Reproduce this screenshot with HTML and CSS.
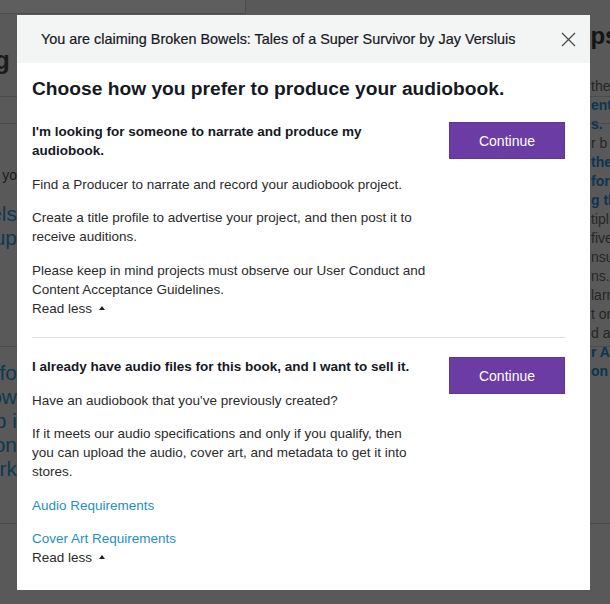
FILE: index.html
```html
<!DOCTYPE html>
<html lang="en">
<head>
<meta charset="utf-8">
<title>Claim audiobook</title>
<link rel="stylesheet" href="styles.css">
</head>
<body>
<div class="page">
  <div class="page-top"></div>
  <div class="page-grid">
    <div class="left-col">
      <div class="cut l-head"><span>Listing</span></div>
      <div class="rule r1"></div>
      <div class="rule r2"></div>
      <div class="cut l-small"><span>for yo</span></div>
      <div class="l-links">
        <div class="cut"><span>Bowels</span></div>
        <div class="cut"><span>group</span></div>
      </div>
      <div class="rule r3"></div>
      <div class="l-links l-links2">
        <div class="cut"><span>fo</span></div>
        <div class="cut"><span>how</span></div>
        <div class="cut"><span>up i</span></div>
        <div class="cut"><span>on</span></div>
        <div class="cut"><span>work</span></div>
      </div>
      <div class="rule r4"></div>
    </div>
    <div class="mid-col"></div>
    <div class="right-col">
      <div class="r-head">Next steps</div>
      <div class="r-lines">
        <div class="dk">the</div>
        <div class="bl">ent</div>
        <div class="bl">s.</div>
        <div class="dk">r b</div>
        <div class="bl">the</div>
        <div class="bl">for</div>
        <div class="bl">g th</div>
        <div class="dk">tipl</div>
        <div class="dk">five</div>
        <div class="dk">nsu</div>
        <div class="dk">ns.</div>
        <div class="dk">larn</div>
        <div class="dk">t or</div>
        <div class="dk">d ar</div>
        <div class="bl">r A</div>
        <div class="bl">on F</div>
      </div>
    </div>
  </div>
</div>

<div class="modal" role="dialog">
  <div class="modal-header">
    <div class="modal-title">You are claiming Broken Bowels: Tales of a Super Survivor by Jay Versluis</div>
    <button class="close" aria-label="Close">
      <svg width="15" height="15" viewBox="0 0 15 15"><path d="M1 1L14 14M14 1L1 14" stroke="#4a4a4a" stroke-width="1.3" fill="none"/></svg>
    </button>
  </div>
  <div class="modal-body">
    <h2>Choose how you prefer to produce your audiobook.</h2>
    <div class="option">
      <div class="option-text">
        <p class="strong">I'm looking for someone to narrate and produce my audiobook.</p>
        <p>Find a Producer to narrate and record your audiobook project.</p>
        <p>Create a title profile to advertise your project, and then post it to receive auditions.</p>
        <p class="last">Please keep in mind projects must observe our User Conduct and Content Acceptance Guidelines.</p>
        <div class="read-less">Read less <span class="caret"></span></div>
      </div>
      <button class="continue">Continue</button>
    </div>
    <div class="option option2">
      <div class="option-text">
        <p class="strong">I already have audio files for this book, and I want to sell it.</p>
        <p>Have an audiobook that you've previously created?</p>
        <p>If it meets our audio specifications and only if you qualify, then<br>you can upload the audio, cover art, and metadata to get it into<br>stores.</p>
        <p><a href="#">Audio Requirements</a></p>
        <p class="last"><a href="#">Cover Art Requirements</a></p>
        <div class="read-less">Read less <span class="caret"></span></div>
      </div>
      <button class="continue">Continue</button>
    </div>
  </div>
</div>
</body>
</html>
```

FILE: styles.css
```css
html, body {
  margin: 0;
  padding: 0;
}
body {
  width: 610px;
  height: 604px;
  overflow: hidden;
  background: #595959;
  font-family: "Liberation Sans", Arial, sans-serif;
  position: relative;
}

/* dimmed background page */
.page-top {
  width: 245px;
  height: 13px;
  background: #5e5e5e;
  border-bottom: 1px solid #4c4c4c;
  border-right: 1px solid #4c4c4c;
  border-bottom-right-radius: 2px;
}
.page-grid {
  display: grid;
  grid-template-columns: 17px 573px 20px;
}
.left-col {
  display: flex;
  flex-direction: column;
  color: #1b1b1b;
}
.cut {
  display: flex;
  justify-content: flex-end;
  white-space: nowrap;
}
.cut span {
  flex-shrink: 0;
}
.l-head {
  margin-top: 30px;
  font: bold 26px/32px "Liberation Sans", Arial, sans-serif;
  padding-right: 7px;
}
.rule {
  height: 1px;
  background: #4b4b4b;
  width: 610px;
}
.r1 { margin-top: 20px; }
.r2 { margin-top: 26px; }
.l-small {
  margin-top: 42px;
  font-size: 14px;
  line-height: 19px;
}
.l-links {
  margin-top: 17px;
  font-size: 21px;
  line-height: 24px;
  color: #0e3a50;
}
.r3 { margin-top: 96px; }
.l-links2 { margin-top: 14px; }
.r4 { margin-top: 42px; }

.right-col {
  display: flex;
  flex-direction: column;
  white-space: nowrap;
}
.r-head {
  margin-top: 8px;
  margin-left: -93px;
  font: bold 24px/28px "Liberation Sans", Arial, sans-serif;
  color: #141414;
}
.r-lines {
  margin-top: 27px;
  font-size: 14px;
  line-height: 19px;
}
.r-lines div { margin-left: 1px; }
.dk { color: #262626; }
.bl { color: #0d3550; font-weight: bold; }

/* modal */
.modal {
  position: absolute;
  left: 17px;
  top: 15px;
  width: 573px;
  height: 575px;
  background: #fff;
}
.modal-header {
  height: 48px;
  background: #f3f4f4;
  display: flex;
  align-items: center;
  justify-content: space-between;
  padding: 0 14px 0 24px;
}
.modal-title {
  font: 14.4px/17px "Liberation Sans", Arial, sans-serif;
  color: #16191f;
  -webkit-text-stroke: 0.2px #16191f;
}
.close {
  border: 0;
  background: none;
  padding: 0;
  width: 15px;
  height: 15px;
  display: flex;
}
.modal-body {
  padding: 14px 25px 0 15px;
}
h2 {
  margin: 0;
  font: bold 19.2px/24px "Liberation Sans", Arial, sans-serif;
  color: #16191f;
}
.option {
  display: flex;
  justify-content: space-between;
  align-items: flex-start;
  padding: 21px 0 19px;
  border-bottom: 1px solid #dcdcdc;
}
.option2 {
  border-bottom: 0;
  padding-top: 19.5px;
}
.option-text {
  width: 400px;
  font-size: 13.5px;
  line-height: 19px;
  color: #2b2b2b;
}
.option-text p {
  margin: 0 0 14.5px;
}
.option-text p.last {
  margin-bottom: 0;
}
.strong {
  font-weight: bold;
  color: #16191f;
}
.option-text a {
  color: #1f8fc4;
  text-decoration: none;
}
.read-less {
  color: #2b2b2b;
}
.caret {
  display: inline-block;
  width: 0;
  height: 0;
  border-left: 3.5px solid transparent;
  border-right: 3.5px solid transparent;
  border-bottom: 4px solid #222;
  margin-left: 3px;
  vertical-align: 3px;
}
.continue {
  width: 116px;
  height: 37px;
  margin-top: 0;
  border: 1px solid #5f3596;
  background: #6b3ca4;
  color: #fff;
  font-family: "Liberation Sans", Arial, sans-serif;
  font-size: 14px;
  padding: 0;
}
```
